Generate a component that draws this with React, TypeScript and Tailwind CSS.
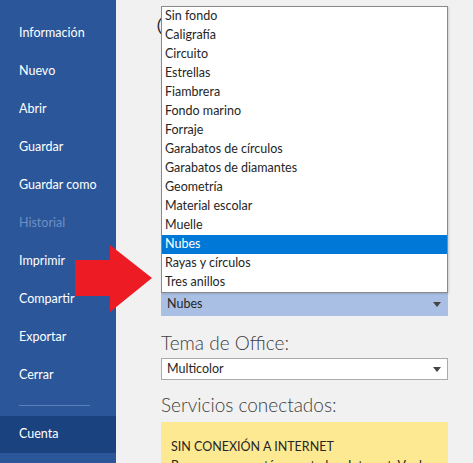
import React from "react";

const items = [
  "Sin fondo",
  "Caligrafía",
  "Circuito",
  "Estrellas",
  "Fiambrera",
  "Fondo marino",
  "Forraje",
  "Garabatos de círculos",
  "Garabatos de diamantes",
  "Geometría",
  "Material escolar",
  "Muelle",
  "Nubes",
  "Rayas y círculos",
  "Tres anillos",
];

const menu = [
  { t: "Información" },
  { t: "Nuevo" },
  { t: "Abrir" },
  { t: "Guardar" },
  { t: "Guardar como" },
  { t: "Historial", disabled: true },
  { t: "Imprimir" },
  { t: "Compartir" },
  { t: "Exportar" },
  { t: "Cerrar" },
];

function Caret() {
  return (
    <svg width="8" height="5" viewBox="0 0 8 5" className="shrink-0">
      <path d="M0 0 H8 L4 5 Z" fill="#444" />
    </svg>
  );
}

export default function App() {
  return (
    <div
      className="relative flex h-[463px] w-[473px] overflow-hidden bg-[#f1f1f1]"
      style={{ fontFamily: 'Lato, "Open Sans", sans-serif' }}
    >
      <div className="flex w-[116px] shrink-0 flex-col bg-[#2b579a] pt-[14px] text-[12.5px] text-white">
        {menu.map((m) => (
          <div
            key={m.t}
            className={`flex h-[38px] shrink-0 items-center pl-[19px] ${m.disabled ? "text-[#6f8fc2]" : ""}`}
          >
            {m.t}
          </div>
        ))}
        <div className="ml-[19px] mt-[11px] h-px w-[71px] shrink-0 bg-[#5a7fb9]" />
        <div className="mt-[10px] flex h-[37px] shrink-0 items-center bg-[#19427f] pl-[19px]">Cuenta</div>
      </div>

      <div className="block w-[287px] shrink-0 pl-[45px] box-content">
        <div className="ml-[-5px] pt-[9px] text-[27px] font-light leading-[34px] text-[#262626]">
          Cuenta
        </div>
        <div className="h-[250px]" />
        <div className="relative">
          <div className="absolute bottom-full left-0 z-10 w-[287px] border border-[#8a8a8a] bg-white text-[12.5px] text-[#262626] shadow-[1px_1px_2px_rgba(0,0,0,0.15)]">
            {items.map((it) => (
              <div
                key={it}
                className={`flex h-[19px] items-center pl-[3px] ${it === "Nubes" ? "bg-[#0078d7] text-white" : ""}`}
              >
                {it}
              </div>
            ))}
          </div>
          <div className="flex h-[23px] w-[287px] items-center justify-between bg-[#a9c0e4] pl-[6px] pr-[7px] text-[12.5px] text-[#262626]">
            <span>Nubes</span>
            <Caret />
          </div>
        </div>

        <div className="mt-[15px] text-[19px] font-light leading-[24px] text-[#404040]">
          Tema de Office:
        </div>
        <div className="mt-[3px] flex h-[22px] w-[287px] items-center justify-between border border-[#ababab] bg-white pl-[5px] pr-[6px] text-[12.5px] text-[#262626]">
          <span>Multicolor</span>
          <Caret />
        </div>

        <div className="mt-[13px] text-[19px] font-light leading-[24px] text-[#404040]">
          Servicios conectados:
        </div>
        <div className="mt-[5px] w-[287px] bg-[#fde991] px-[10px] pt-[17px] pb-4 text-[12.5px] leading-[16px] text-[#262626]">
          <div>SIN CONEXIÓN A INTERNET</div>
          <div className="mt-[3px]">Parece que no está conectado a Internet. Vuelva a intentarlo más tarde.</div>
        </div>
      </div>

      <svg
        className="pointer-events-none absolute left-0 top-0 z-20"
        width="473"
        height="463"
        viewBox="0 0 473 463"
      >
        <polygon
          points="75,260 110,260 110,245 152,278 110,312 110,296 75,296"
          fill="#ed1c24"
        />
      </svg>
    </div>
  );
}
